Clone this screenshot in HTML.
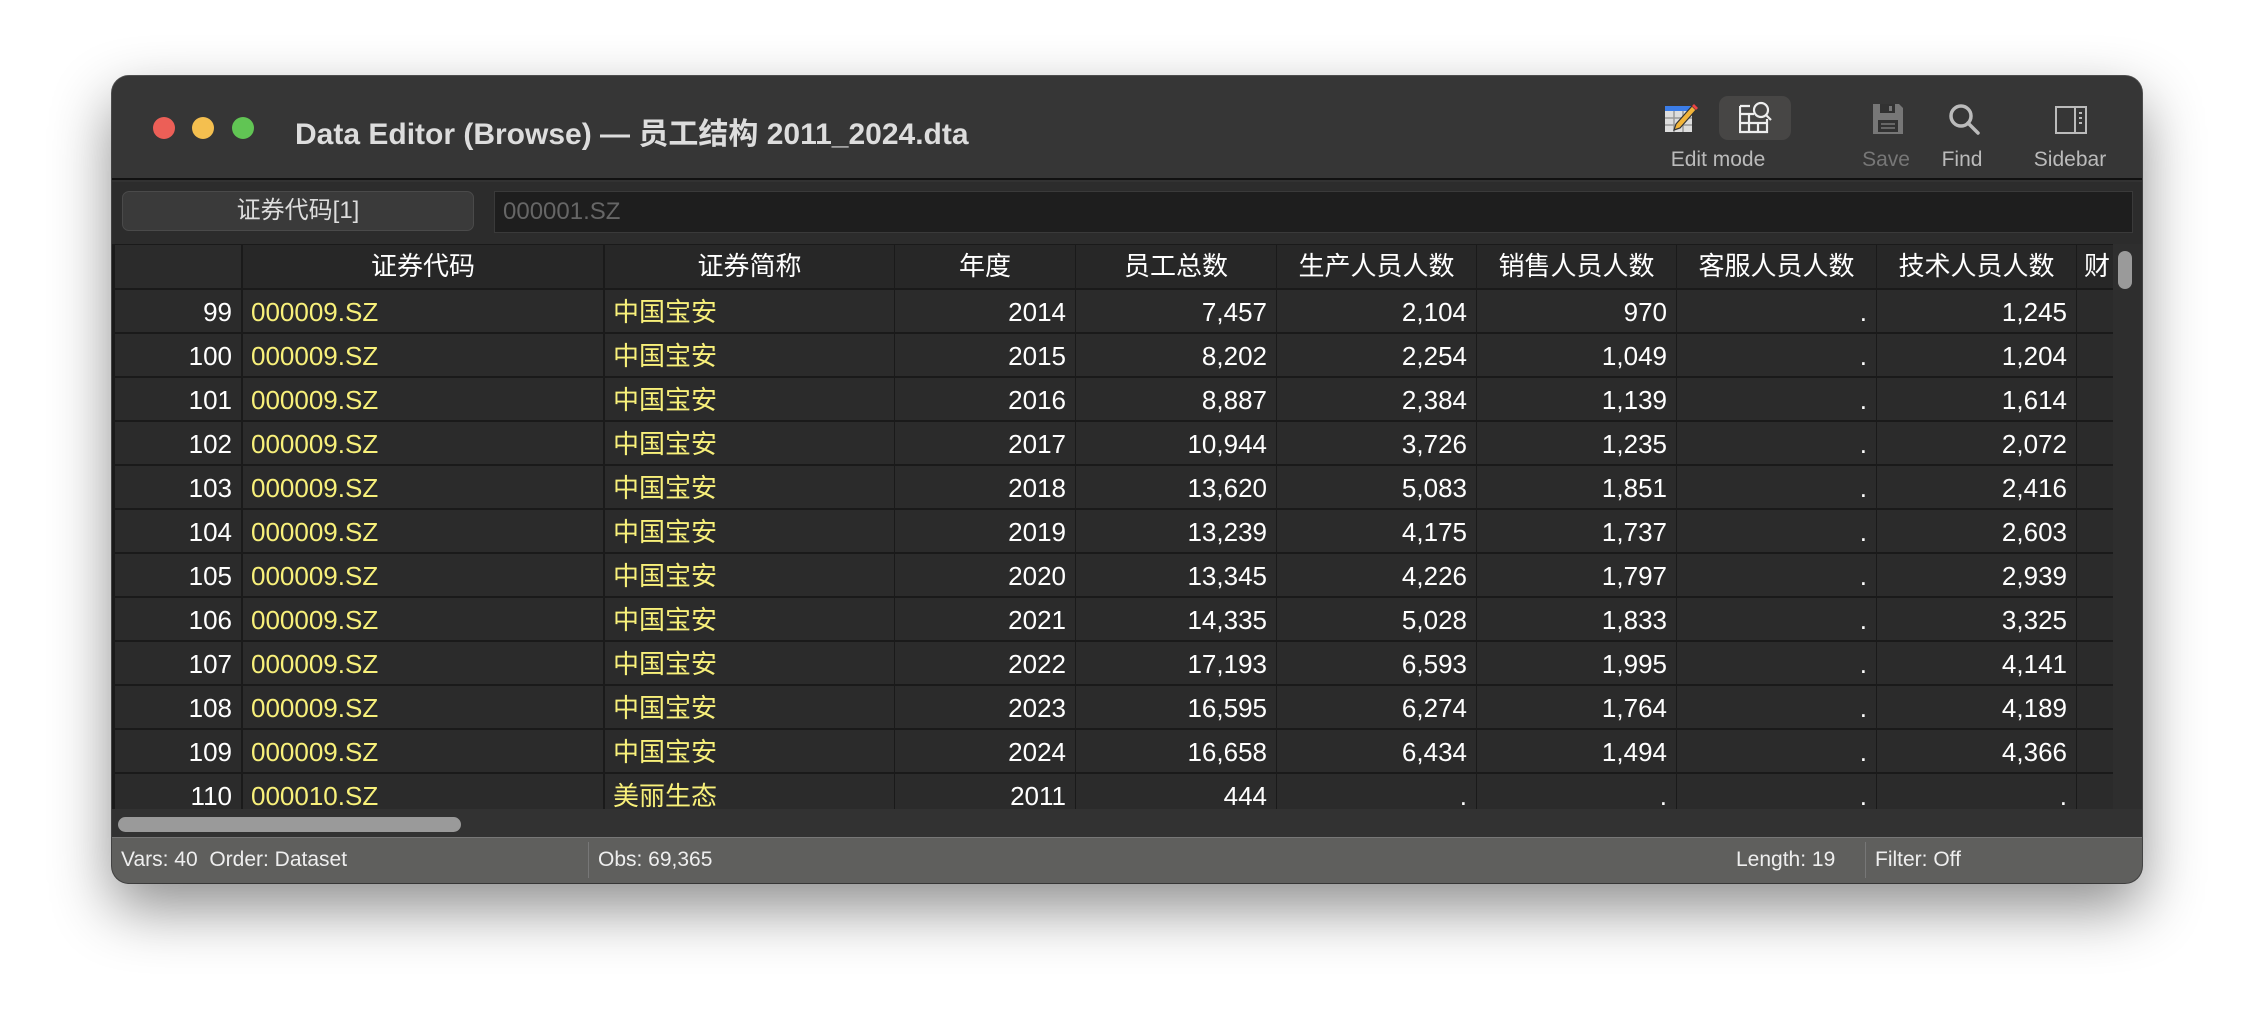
<!DOCTYPE html>
<html><head><meta charset="utf-8"><style>
*{margin:0;padding:0;box-sizing:border-box}
body{width:2254px;height:1032px;background:#fff;position:relative;overflow:hidden;font-family:"Liberation Sans","Noto Sans CJK SC",sans-serif}
.win{position:absolute;left:112px;top:76px;width:2030px;height:807px;border-radius:17px;background:#323232;overflow:hidden;box-shadow:0 25px 60px rgba(0,0,0,.45),0 0 0 1px #555;}
.title{position:absolute;left:0;top:0;width:100%;height:104px;background:#363636;border-bottom:2px solid #111}
.dot{position:absolute;top:41px;width:22px;height:22px;border-radius:50%}
.ttl{position:absolute;left:183px;top:33px;font-size:30px;font-weight:bold;color:#ddd}
.lbl{position:absolute;top:72px;font-size:21px;color:#bbb;transform:translateX(-50%)}
.abs{position:absolute}
.cell{position:absolute;height:42px;line-height:44px;font-size:26px;color:#fff;background:#2b2b2b;white-space:nowrap;overflow:hidden}
.r{text-align:right;padding-right:9px}
.y{color:#f8f07a;padding-left:8px}
.h{text-align:center;background:#272727;height:43px;line-height:42px}
</style></head><body>
<div class="win">
<div class="title">
<div class="dot" style="left:41px;background:#ec5f57"></div>
<div class="dot" style="left:80px;background:#f4bf4f"></div>
<div class="dot" style="left:120px;background:#61c554"></div>
<div class="ttl">Data Editor (Browse) — 员工结构 2011_2024.dta</div>
<div class="abs" style="left:1607px;top:20px;width:72px;height:44px;border-radius:9px;background:#474645"></div>
<svg class="abs" style="left:1552px;top:24px" width="34" height="36" viewBox="0 0 34 36">
<rect x="1" y="6" width="27" height="26" fill="#ddd"/><rect x="1" y="6" width="27" height="5" fill="#3b7de8"/>
<path d="M1 18h27M1 25h27M10 11v21M19 11v21" stroke="#999" stroke-width="1.5"/>
<path d="M12 24l16-18 4 4-16 18-6 2z" fill="#f2b43a" stroke="#333" stroke-width="1.2"/><path d="M28 6l2-2 4 4-2 2z" fill="#e44"/></svg>
<svg class="abs" style="left:1627px;top:24px" width="34" height="36" viewBox="0 0 34 36" fill="none" stroke="#eee" stroke-width="2.2">
<path d="M1 6h10M1 6v26h27V19M1 14h14M1 23h27M10 14v18M19 23v9"/><circle cx="22" cy="10" r="7"/><path d="M27 15l5 5"/></svg>
<svg class="abs" style="left:1759px;top:26px" width="34" height="34" viewBox="0 0 34 34"><path d="M2 2h26l4 4v26H2z" fill="#777"/><rect x="9" y="2" width="15" height="9" fill="#323232"/><rect x="18" y="4" width="3" height="5" fill="#777"/><rect x="7" y="18" width="20" height="12" fill="#323232"/><path d="M10 22h14M10 26h14" stroke="#777" stroke-width="1.5"/></svg>
<svg class="abs" style="left:1835px;top:26px" width="36" height="36" viewBox="0 0 36 36" fill="none" stroke="#bbb" stroke-width="3.5"><circle cx="14" cy="14" r="10"/><path d="M21 21l10 10" stroke-linecap="round"/></svg>
<svg class="abs" style="left:1943px;top:30px" width="32" height="28" viewBox="0 0 32 28" fill="none" stroke="#bbb" stroke-width="2"><rect x="1" y="1" width="30" height="26"/><path d="M20 1v26M24 7h3M24 12h3M24 17h3"/></svg>
<div class="lbl" style="left:1606px">Edit mode</div>
<div class="lbl" style="left:1774px;color:#777">Save</div>
<div class="lbl" style="left:1850px">Find</div>
<div class="lbl" style="left:1958px">Sidebar</div>
</div>
<div class="abs" style="left:0;top:106px;width:100%;height:62px;background:#2c2c2c"></div>
<div class="abs" style="left:10px;top:115px;width:352px;height:40px;border-radius:7px;background:#3a3a3a;border:1px solid #4a4a4a;color:#ddd;font-size:24px;text-align:center;line-height:38px">证券代码[1]</div>
<div class="abs" style="left:382px;top:115px;width:1639px;height:42px;background:#1e1e1e;border:1px solid #3a3a3a;color:#666;font-size:24px;line-height:40px;padding-left:8px">000001.SZ</div>
<div class="abs" style="left:0;top:168px;width:2001px;height:565px;background:#1a1a1a"></div>
<div id="grid"></div>
<div class="abs" style="left:2001px;top:168px;width:29px;height:565px;background:#2e2e2e"></div>
<div class="abs" style="left:2006px;top:175px;width:14px;height:38px;border-radius:7px;background:#9a9a9a"></div>
<div class="abs" style="left:0;top:733px;width:2030px;height:28px;background:#323232"></div>
<div class="abs" style="left:6px;top:741px;width:343px;height:15px;border-radius:8px;background:#9a9a9a"></div>
<div class="abs" style="left:0;top:761px;width:2030px;height:46px;background:#5f5f5d;border-top:1px solid #777;color:#eee;font-size:21px;line-height:44px">
<span class="abs" style="left:9px">Vars: 40&nbsp; Order: Dataset</span>
<span class="abs" style="left:476px;top:4px;height:36px;border-left:1px solid #777"></span>
<span class="abs" style="left:486px">Obs: 69,365</span>
<span class="abs" style="left:1624px">Length: 19</span>
<span class="abs" style="left:1753px;top:4px;height:36px;border-left:1px solid #777"></span>
<span class="abs" style="left:1763px">Filter: Off</span>
</div>
</div>
<script>
const cols=[[3,126],[131,360],[493,289],[783,180],[964,200],[1165,199],[1365,199],[1565,199],[1765,199],[1965,40]];
const hdr=["","证券代码","证券简称","年度","员工总数","生产人员人数","销售人员人数","客服人员人数","技术人员人数","财"];
const d=[[2014,"7,457","2,104","970",".","1,245"],[2015,"8,202","2,254","1,049",".","1,204"],[2016,"8,887","2,384","1,139",".","1,614"],[2017,"10,944","3,726","1,235",".","2,072"],[2018,"13,620","5,083","1,851",".","2,416"],[2019,"13,239","4,175","1,737",".","2,603"],[2020,"13,345","4,226","1,797",".","2,939"],[2021,"14,335","5,028","1,833",".","3,325"],[2022,"17,193","6,593","1,995",".","4,141"],[2023,"16,595","6,274","1,764",".","4,189"],[2024,"16,658","6,434","1,494",".","4,366"],[2011,"444",".",".",".","."]];
let h="";
hdr.forEach((t,i)=>{h+=`<div class="cell h" style="left:${cols[i][0]}px;top:169px;width:${cols[i][1]}px;${i==0?'background:#2b2b2b':''}">${t}</div>`});
d.forEach((r,k)=>{const top=214+k*44;
const v=[99+k,k==11?"000010.SZ":"000009.SZ",k==11?"美丽生态":"中国宝安",...r,""];
v.forEach((t,i)=>{const cl=(i==1||i==2)?"y":"r";h+=`<div class="cell ${cl}" style="left:${cols[i][0]}px;top:${top}px;width:${cols[i][1]}px">${t}</div>`});});
document.getElementById("grid").outerHTML=h;
</script>
</body></html>
